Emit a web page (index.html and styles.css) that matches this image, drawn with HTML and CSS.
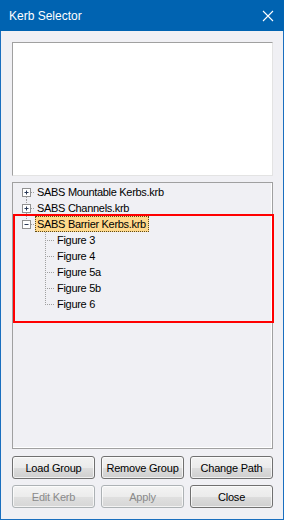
FILE: index.html
```html
<!DOCTYPE html>
<html lang="en">
<head>
    <meta charset="UTF-8">
    <title>Kerb Selector</title>
    <link rel="stylesheet" href="styles.css">
</head>
<body>
<div class="window">
    <div class="titlebar">
        <span class="titlebar__text">Kerb Selector</span>
        <svg class="titlebar__close" width="12" height="12" viewBox="0 0 12 12">
            <path d="M1 1 L11 11 M11 1 L1 11" stroke="#fff" stroke-width="1.1" fill="none"/>
        </svg>
    </div>

    <div class="dialog">
        <div class="preview"></div>

        <div class="tree">
            <div class="tree__row">
                <svg class="tree__lines" width="22" height="16">
                    <line x1="13.5" y1="13" x2="13.5" y2="16" class="dot"/>
                    <line x1="18" y1="8.5" x2="22" y2="8.5" class="dot"/>
                    <rect x="9.5" y="4.5" width="8" height="8" class="box"/>
                    <path d="M11.5 8.5 H15.5 M13.5 6.5 V10.5" class="sign"/>
                </svg>
                <span class="tree__label">SABS Mountable Kerbs.krb</span>
            </div>
            <div class="tree__row">
                <svg class="tree__lines" width="22" height="16">
                    <line x1="13.5" y1="0" x2="13.5" y2="4" class="dot"/>
                    <line x1="13.5" y1="13" x2="13.5" y2="16" class="dot"/>
                    <line x1="18" y1="8.5" x2="22" y2="8.5" class="dot"/>
                    <rect x="9.5" y="4.5" width="8" height="8" class="box"/>
                    <path d="M11.5 8.5 H15.5 M13.5 6.5 V10.5" class="sign"/>
                </svg>
                <span class="tree__label">SABS Channels.krb</span>
            </div>
            <div class="tree__row">
                <svg class="tree__lines" width="22" height="16">
                    <line x1="13.5" y1="0" x2="13.5" y2="4" class="dot"/>
                    <line x1="18" y1="8.5" x2="22" y2="8.5" class="dot"/>
                    <rect x="9.5" y="4.5" width="8" height="8" class="box"/>
                    <path d="M11.5 8.5 H15.5" class="sign"/>
                </svg>
                <span class="tree__label is-selected">SABS Barrier Kerbs.krb</span>
            </div>
            <div class="tree__row">
                <svg class="tree__lines" width="42" height="16">
                    <line x1="32.5" y1="0" x2="32.5" y2="16" class="dot"/>
                    <line x1="34" y1="8.5" x2="42" y2="8.5" class="dot"/>
                </svg>
                <span class="tree__label">Figure 3</span>
            </div>
            <div class="tree__row">
                <svg class="tree__lines" width="42" height="16">
                    <line x1="32.5" y1="0" x2="32.5" y2="16" class="dot"/>
                    <line x1="34" y1="8.5" x2="42" y2="8.5" class="dot"/>
                </svg>
                <span class="tree__label">Figure 4</span>
            </div>
            <div class="tree__row">
                <svg class="tree__lines" width="42" height="16">
                    <line x1="32.5" y1="0" x2="32.5" y2="16" class="dot"/>
                    <line x1="34" y1="8.5" x2="42" y2="8.5" class="dot"/>
                </svg>
                <span class="tree__label">Figure 5a</span>
            </div>
            <div class="tree__row">
                <svg class="tree__lines" width="42" height="16">
                    <line x1="32.5" y1="0" x2="32.5" y2="16" class="dot"/>
                    <line x1="34" y1="8.5" x2="42" y2="8.5" class="dot"/>
                </svg>
                <span class="tree__label">Figure 5b</span>
            </div>
            <div class="tree__row">
                <svg class="tree__lines" width="42" height="16">
                    <line x1="32.5" y1="0" x2="32.5" y2="9" class="dot"/>
                    <line x1="34" y1="8.5" x2="42" y2="8.5" class="dot"/>
                </svg>
                <span class="tree__label">Figure 6</span>
            </div>

            <!-- highlight annotation -->
            <div class="tree__mark"></div>
        </div>

        <div class="buttons">
            <button class="btn" type="button">Load Group</button>
            <button class="btn" type="button">Remove Group</button>
            <button class="btn" type="button">Change Path</button>
            <button class="btn" type="button" disabled>Edit Kerb</button>
            <button class="btn" type="button" disabled>Apply</button>
            <button class="btn" type="button">Close</button>
        </div>
    </div>
</div>
</body>
</html>
```

FILE: styles.css
```css
/* Page */
html, body {
    margin: 0;
    padding: 0;
}

body {
    width: 284px;
    height: 520px;
    font-family: "Liberation Sans", Arial, sans-serif;
    font-size: 11px;
    color: #000;
}

/* Window frame */
.window {
    width: 284px;
    height: 520px;
    box-sizing: border-box;
    border: 1px solid #1a6fbf;
    border-top: none;
    background: #f0f0f4;
    display: flex;
    flex-direction: column;
}

/* Title bar */
.titlebar {
    height: 31px;
    margin: 0 -1px;
    background: #0063b1;
    color: #fff;
    display: flex;
    align-items: center;
    justify-content: space-between;
    padding: 0 10px 0 9px;
}

.titlebar__text {
    font-size: 12px;
    padding-top: 1px;
}

.titlebar__close {
    display: block;
}

/* Dialog body */
.dialog {
    flex: 1;
    display: flex;
    flex-direction: column;
    padding: 11px 10px 0 11px;
}

.preview {
    height: 134px;
    box-sizing: border-box;
    background: #fff;
    border: 1px solid #a0a0a0;
    border-right-color: #e3e3e3;
    border-bottom-color: #e3e3e3;
}

/* Tree view */
.tree {
    position: relative;
    margin-top: 6px;
    height: 267px;
    box-sizing: border-box;
    border: 1px solid #a0a0a0;
    box-shadow: inset -1px -1px 0 #fff;
    padding-top: 1px;
}

.tree__row {
    height: 16px;
    display: flex;
    align-items: center;
}

.tree__lines {
    display: block;
    flex: none;
}

.tree__lines .dot {
    stroke: #a0a0a0;
    stroke-width: 1;
    stroke-dasharray: 1 1;
}

.tree__lines .box {
    fill: #fff;
    stroke: #919191;
    stroke-width: 1;
}

.tree__lines .sign {
    stroke: #2b3a57;
    stroke-width: 1;
    fill: none;
}

.tree__label {
    height: 16px;
    line-height: 15px;
    box-sizing: border-box;
    padding: 0 2px 0 1px;
    border: 1px solid transparent;
    white-space: nowrap;
    letter-spacing: -0.3px;
}

.tree__label.is-selected {
    background: #ffd98c;
    border: 1px dotted #5c4a1a;
}

/* Red annotation frame over the tree */
.tree__mark {
    position: absolute;
    left: 0;
    top: 31px;
    width: 261px;
    height: 109px;
    box-sizing: border-box;
    border: 2px solid #ff0000;
}

/* Buttons */
.buttons {
    margin-top: 7px;
    display: grid;
    grid-template-columns: repeat(3, 83px);
    column-gap: 6px;
    row-gap: 6px;
}

.btn {
    height: 23px;
    padding: 0;
    font-family: "Liberation Sans", Arial, sans-serif;
    font-size: 11px;
    letter-spacing: -0.2px;
    color: #000;
    border: 1px solid #707070;
    border-radius: 3px;
    background: linear-gradient(to bottom, #f2f2f2 0%, #ebebeb 50%, #dddddd 51%, #cfcfcf 100%);
    box-shadow: inset 0 0 0 1px rgba(255, 255, 255, 0.7);
}

.btn:disabled {
    color: #8a8a8a;
    border-color: #adb2b5;
    background: linear-gradient(to bottom, #f4f4f4 0%, #ececec 50%, #e0e0e0 51%, #d6d6d6 100%);
}
```
